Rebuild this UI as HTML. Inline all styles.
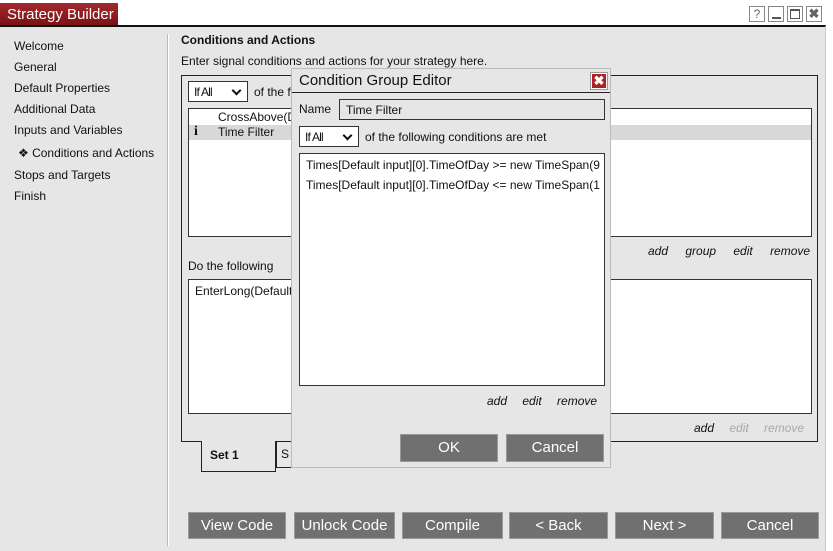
<!DOCTYPE html><html><head><style>
*{box-sizing:border-box}body{margin:0;width:833px;height:551px;background:#fff;font-family:"Liberation Sans",sans-serif;font-size:12px;color:#111;position:relative;overflow:hidden}
.a{position:absolute}
.win{left:0;top:25px;width:826px;height:526px;background:#e6e6e6;border-top:2px solid #111;border-right:1px solid #ccc}
.nav{left:14px;font-size:12px}
.btn{position:absolute;background:#707070;color:#fff;font-size:15px;text-align:center;line-height:25px;border:1px solid #999}
.box{position:absolute;background:#fff;border:1px solid #333}
.sel{position:absolute;background:#fff;border:1px solid #333;font-size:12px;padding:3px 5px;letter-spacing:-.8px}
.sel:after{content:"";position:absolute;right:7px;top:5px;width:5px;height:5px;border-right:2px solid #111;border-bottom:2px solid #111;transform:rotate(45deg)}
.it{font-style:italic;font-size:12px}
</style></head><body>
<div class="a" style="left:0;top:3px;width:118px;height:23px;background:linear-gradient(#a32a2f,#7a1013);color:#fff;font-size:15px;padding:3px 0 0 7px">Strategy Builder</div>
<div class="a" style="left:749px;top:6px;width:16px;height:16px;border:1px solid #888;color:#666;font-size:12px;text-align:center;line-height:14px">?</div>
<div class="a" style="left:768px;top:6px;width:16px;height:16px;border:1px solid #888"><div class="a" style="left:3px;top:10px;width:9px;height:2px;background:#555"></div></div>
<div class="a" style="left:787px;top:6px;width:16px;height:16px;border:1px solid #888"><div class="a" style="left:2px;top:2px;width:10px;height:10px;border:1px solid #555;border-top-width:2px"></div></div>
<div class="a" style="left:806px;top:6px;width:16px;height:16px;border:1px solid #888;color:#666;font-weight:bold;font-size:13px;text-align:center;line-height:14px">✖</div>
<div class="a win"></div>
<div class="a nav" style="top:39px">Welcome</div>
<div class="a nav" style="top:60px">General</div>
<div class="a nav" style="top:81px">Default Properties</div>
<div class="a nav" style="top:102px">Additional Data</div>
<div class="a nav" style="top:123px">Inputs and Variables</div>
<div class="a nav" style="top:146px;left:18px">❖ Conditions and Actions</div>
<div class="a nav" style="top:168px">Stops and Targets</div>
<div class="a nav" style="top:189px">Finish</div>
<div class="a" style="left:167px;top:34px;width:2px;height:512px;background:#fff;border-left:1px solid #bbb"></div>
<div class="a" style="left:181px;top:33px;font-weight:bold">Conditions and Actions</div>
<div class="a" style="left:181px;top:54px">Enter signal conditions and actions for your strategy here.</div>
<div class="a" style="left:181px;top:75px;width:637px;height:367px;border:1px solid #222"></div>
<div class="sel" style="left:188px;top:81px;width:60px;height:21px">If All</div>
<div class="a" style="left:254px;top:85px">of the following conditions are met</div>
<div class="box" style="left:188px;top:108px;width:624px;height:129px"><div class="a" style="left:0;top:16px;width:622px;height:15px;background:#d8d8d8"></div>
<div class="a" style="left:29px;top:1px">CrossAbove(Default input)</div><div class="a" style="left:5px;top:15px;font-family:'Liberation Serif';font-weight:bold;font-size:14px">i</div><div class="a" style="left:29px;top:16px">Time Filter</div></div>
<div class="a it" style="left:648px;top:244px;word-spacing:14px">add group edit remove</div>
<div class="a" style="left:188px;top:259px">Do the following</div>
<div class="box" style="left:188px;top:279px;width:624px;height:135px"><div class="a" style="left:6px;top:4px">EnterLong(Default input)</div></div>
<div class="a it" style="left:694px;top:421px;word-spacing:12px">add <span style="color:#aaa">edit remove</span></div>
<div class="a" style="left:201px;top:441px;width:75px;height:31px;background:#e6e6e6;border:1px solid #222;border-top:none;padding:7px 8px;font-weight:bold">Set 1</div>
<div class="a" style="left:276px;top:441px;width:70px;height:27px;border-left:1px solid #222;border-bottom:1px solid #222;padding:6px 4px">S</div>
<div class="a" style="left:291px;top:68px;width:320px;height:400px;background:#e6e6e6;border:1px solid #bbb">
<div class="a" style="left:0;top:0;width:318px;height:24px;border-bottom:1px solid #222"></div>
<div class="a" style="left:7px;top:3px;font-size:15px">Condition Group Editor</div>
<div class="a" style="left:299px;top:4px;width:16px;height:16px;background:#b02028;border:1px solid #fff;outline:1px solid #999;color:#fff;font-weight:bold;font-size:13px;text-align:center;line-height:14px">✖</div>
<div class="a" style="left:7px;top:33px">Name</div>
<div class="a" style="left:47px;top:30px;width:266px;height:21px;border:1px solid #333;padding:3px 6px">Time Filter</div>
<div class="sel" style="left:7px;top:57px;width:60px;height:21px">If All</div>
<div class="a" style="left:73px;top:61px">of the following conditions are met</div>
<div class="box" style="left:7px;top:84px;width:306px;height:233px;overflow:hidden;white-space:nowrap"><div class="a" style="left:6px;top:4px">Times[Default input][0].TimeOfDay &gt;= new TimeSpan(9</div><div class="a" style="left:6px;top:24px">Times[Default input][0].TimeOfDay &lt;= new TimeSpan(1</div></div>
<div class="a it" style="left:195px;top:325px;word-spacing:12px">add edit remove</div>
<div class="btn" style="left:108px;top:365px;width:98px;height:28px">OK</div>
<div class="btn" style="left:214px;top:365px;width:98px;height:28px">Cancel</div>
</div>
<div class="btn" style="left:188px;top:512px;width:98px;height:27px">View Code</div>
<div class="btn" style="left:294px;top:512px;width:101px;height:27px">Unlock Code</div>
<div class="btn" style="left:402px;top:512px;width:101px;height:27px">Compile</div>
<div class="btn" style="left:509px;top:512px;width:99px;height:27px">&lt; Back</div>
<div class="btn" style="left:615px;top:512px;width:99px;height:27px">Next &gt;</div>
<div class="btn" style="left:721px;top:512px;width:98px;height:27px">Cancel</div>
</body></html>
